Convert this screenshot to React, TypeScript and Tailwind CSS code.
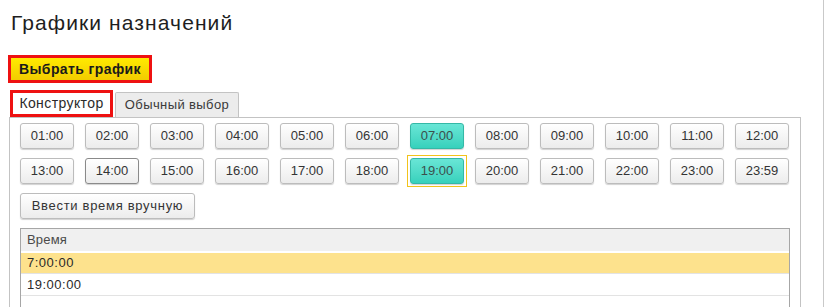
const times = [
  "01:00", "02:00", "03:00", "04:00", "05:00", "06:00", "07:00", "08:00", "09:00", "10:00", "11:00", "12:00",
  "13:00", "14:00", "15:00", "16:00", "17:00", "18:00", "19:00", "20:00", "21:00", "22:00", "23:00", "23:59",
];

const selected = ["07:00", "19:00"];

const btnBase =
  "flex h-[26px] items-center justify-center rounded-[3px] border text-[13px] shadow-[0_1px_1px_rgba(0,0,0,0.18)]";

function TimeButton({ label }: { label: string }) {
  const isOn = selected.includes(label);
  const focused = label === "19:00";
  const hovered = label === "14:00";

  const button = (
    <button
      type="button"
      className={
        isOn
          ? `${btnBase} w-[54px] border-[#35b8a6] bg-gradient-to-b from-[#68e6d6] to-[#36d1bc] text-[#3b4f4c]`
          : hovered
            ? `${btnBase} w-[54px] border-[#8a8a8a] bg-gradient-to-b from-white to-[#ececec] text-[#343434]`
            : `${btnBase} w-[54px] border-[#bcbcbc] bg-gradient-to-b from-white to-[#ececec] text-[#343434]`
      }
    >
      {label}
    </button>
  );

  if (focused) {
    return (
      <div className="relative">
        <div className="pointer-events-none absolute -inset-[3px] border border-[#f2c31b]" />
        {button}
      </div>
    );
  }
  return button;
}

export default function App() {
  return (
    <div className="h-[307px] w-[825px] overflow-hidden bg-white font-['Liberation_Sans',Arial,sans-serif] text-[#333]">
      <div className="flex h-full w-[824px] flex-col border-r border-[#c9c9c9]">
        <h1 className="pl-[11px] pt-[10px] text-[21px] leading-[26px] tracking-[1.1px] text-[#1e1e1e]">
          Графики назначений
        </h1>

        <div className="ml-[8px] mt-[19px] w-[144px] border-[3px] border-[#ee1111]">
          <button
            type="button"
            className="flex h-[22px] w-full items-center justify-center bg-gradient-to-b from-[#ffea00] to-[#f2cc00] text-[14px] font-bold tracking-[0.4px] text-[#1a1a1a]"
          >
            Выбрать график
          </button>
        </div>

        <div className="ml-[10px] mt-[7px] flex items-end gap-[2px]">
          <div className="flex h-[27px] w-[103px] items-center justify-center border-[3px] border-[#ee1111] bg-white text-[14px] tracking-[0.4px] text-[#2a2a2a]">
            Конструктор
          </div>
          <div className="flex h-[25px] w-[124px] items-center justify-center rounded-t-[2px] border border-b-0 border-[#c3c3c3] bg-[#ececec] text-[13px] tracking-[0.4px] text-[#3a3a3a]">
            Обычный выбор
          </div>
        </div>

        <div className="ml-[9px] flex w-[792px] flex-1 flex-col border border-b-0 border-[#c3c3c3] pl-[10px] pt-[5px]">
          <div className="grid grid-cols-[repeat(12,54px)] gap-x-[11px] gap-y-[9px]">
            {times.map((t) => (
              <TimeButton key={t} label={t} />
            ))}
          </div>

          <button
            type="button"
            className={`${btnBase} mt-[9px] w-[175px] border-[#bcbcbc] bg-gradient-to-b from-white to-[#ececec] tracking-[0.7px] text-[#343434]`}
          >
            Ввести время вручную
          </button>

          <div className="mt-[9px] w-[770px] flex-1 border border-b-0 border-[#a6a6a6] text-[13px]">
            <div className="flex h-[22px] items-center bg-[#f0f0f0] pl-[6px] tracking-[0.2px] text-[#4a4a4a]">Время</div>
            <div className="mt-[2px] flex h-[20px] items-center bg-[#fde28d] pl-[6px] tracking-[0.5px] text-[#2a2a2a]">
              7:00:00
            </div>
            <div className="flex h-[23px] items-center border-y border-[#e3e3e3] pl-[6px] tracking-[0.5px] text-[#2a2a2a]">
              19:00:00
            </div>
          </div>
        </div>
      </div>
    </div>
  );
}
